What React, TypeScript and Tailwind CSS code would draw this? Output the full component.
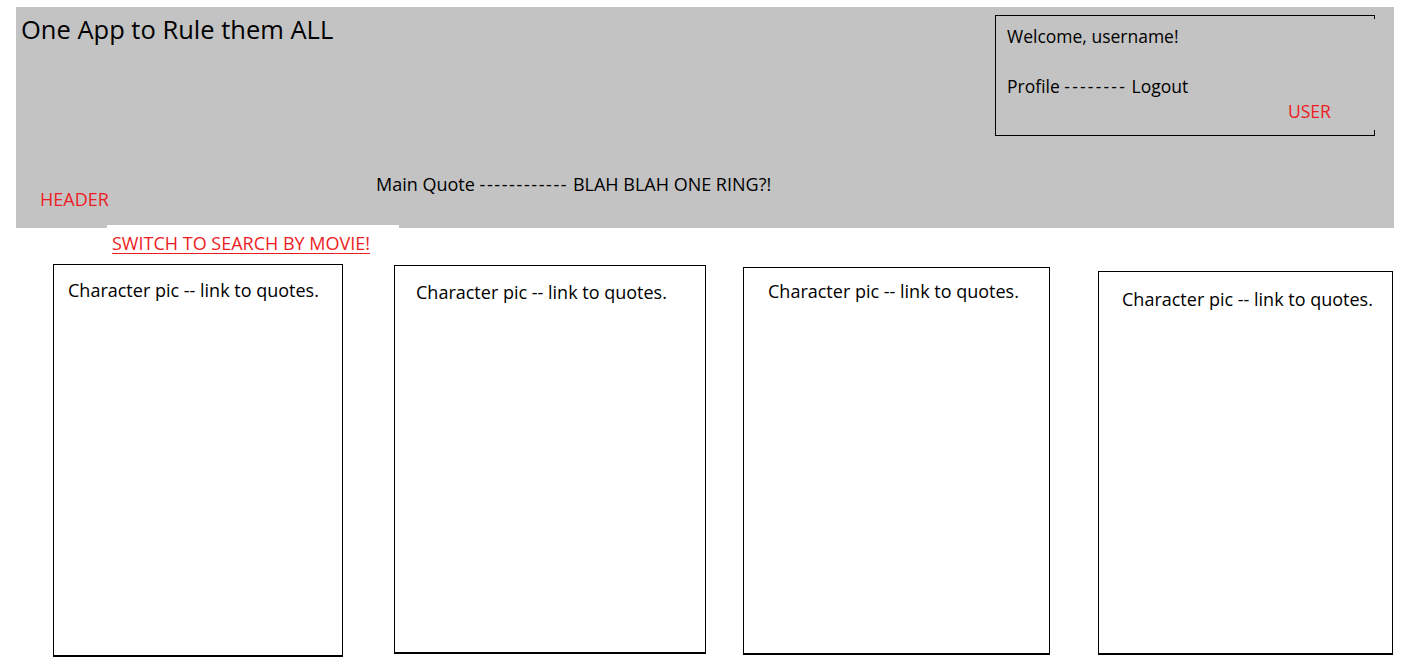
const cards = [
  { box: "w-[290px] h-[393px]", text: "pt-[16px] pl-[14px]" },
  { box: "ml-[51px] mt-[1px] w-[312px] h-[389px]", text: "pt-[17px] pl-[21px]" },
  { box: "ml-[37px] mt-[3px] w-[307px] h-[388px]", text: "pt-[14px] pl-[24px]" },
  { box: "ml-[48px] mt-[7px] w-[295px] h-[384px]", text: "pt-[18px] pl-[23px]" },
]

export default function App() {
  return (
    <div className="w-[1416px] h-[672px] bg-white pt-[7px] font-['Open_Sans',sans-serif] text-black leading-none overflow-hidden">
      {/* header */}
      <header className="ml-[16px] w-[1378px] h-[221px] bg-[#c3c3c3] flex flex-col">
        <div className="flex items-start justify-between">
          <h1 className="ml-[5px] mt-[10px] text-[25.5px] font-normal">One App to Rule them ALL</h1>

          {/* user box - right border only shows as ticks */}
          <div className="relative mt-[8px] mr-[19px] w-[380px] h-[121px] border border-r-0 border-black pl-[11px] pt-[12px] text-[17.5px]">
            <div className="absolute right-0 top-[-1px] w-px h-[4px] bg-black" />
            <div className="absolute right-0 bottom-[-1px] w-px h-[6px] bg-black" />
            <p>Welcome, username!</p>
            <p className="mt-[32px]">Profile <span className="tracking-[2.2px]">--------</span> Logout</p>
            <p className="mt-[8px] ml-[281px] text-[#ed1c24]">USER</p>
          </div>
        </div>

        <div className="mt-[39px] flex items-start text-[18px]">
          <div className="w-[360px] pl-[24px] pt-[15px] text-[#ed1c24]">HEADER</div>
          <div>Main Quote <span className="tracking-[1.6px]">------------</span> BLAH BLAH ONE RING?!</div>
        </div>
      </header>

      <div className="relative -mt-[3px] ml-[107px] w-[292px] h-[32px] bg-white pl-[5px] pt-[9px] text-[18px]">
        <a href="#" className="text-[#ed1c24] underline underline-offset-[3px]">SWITCH TO SEARCH BY MOVIE!</a>
      </div>

      {/* character cards */}
      <div className="mt-[7px] pl-[53px] flex items-start text-[18px]">
        {cards.map((c, i) => (
          <div key={i} className={`${c.box} border border-b-2 border-black ${c.text}`}>
            Character pic -- link to quotes.
          </div>
        ))}
      </div>
    </div>
  )
}
